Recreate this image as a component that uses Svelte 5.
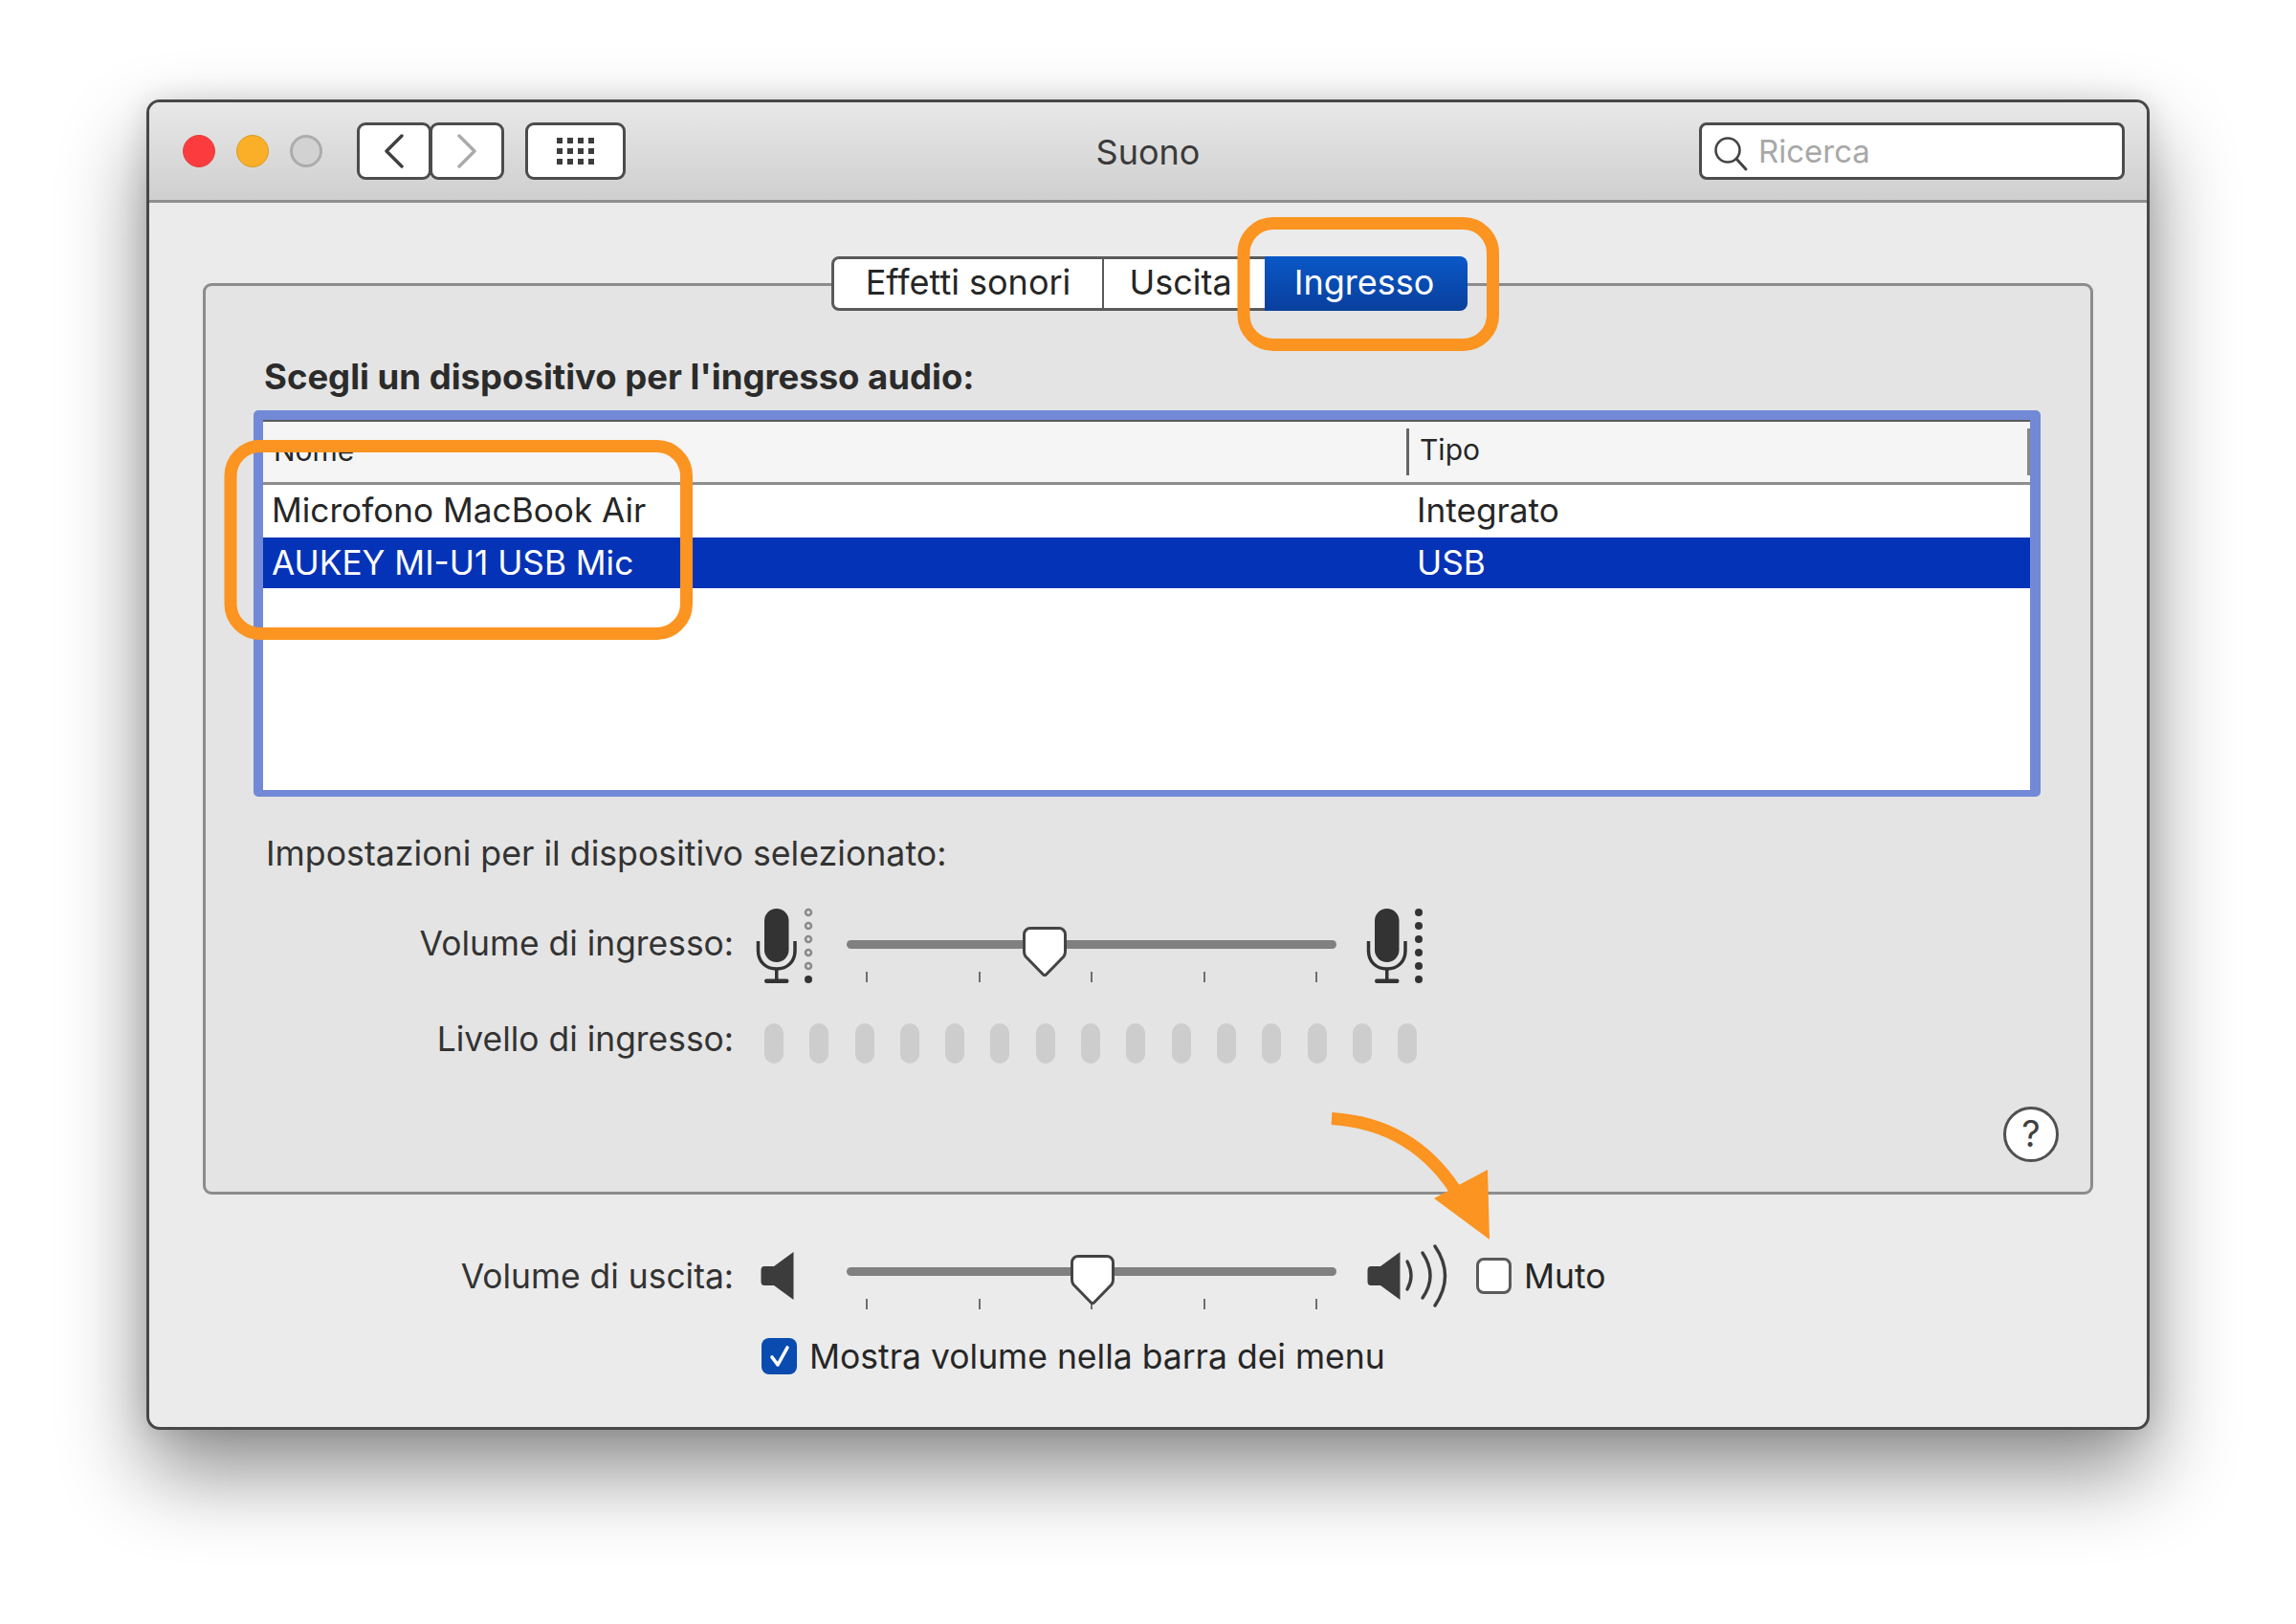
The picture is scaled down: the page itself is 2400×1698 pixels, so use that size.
<script>
  const devices = [
    { name: 'Microfono MacBook Air', type: 'Integrato', selected: false },
    { name: 'AUKEY MI-U1 USB Mic', type: 'USB', selected: true }
  ];
  const ticks = [0, 1, 2, 3, 4];
  const micDots = [8, 22, 36, 50, 64, 78];
  const levels = Array.from({ length: 15 }, (_, i) => i);
  const gridDots = Array.from({ length: 12 }, (_, i) => i);
</script>

{#snippet mic(full)}
  <svg class="mic" width="70" height="85" viewBox="0 0 70 85">
    <rect x="14" y="4" width="25.5" height="56" rx="12.7" fill="#333" />
    <path d="M7.5 38V48C7.5 59 15 67 26.75 67S46 59 46 48V38" fill="none" stroke="#333" stroke-width="3.5" />
    <path d="M26.75 67V79" stroke="#333" stroke-width="3.5" />
    <rect x="14" y="77.5" width="25.5" height="4.5" rx="2.2" fill="#333" />
    {#each micDots as y, i}
      {#if full || i === 5}
        <circle cx="60" cy={y} r="4" fill="#333" />
      {:else}
        <circle cx="60" cy={y} r="3" fill="none" stroke="#8a8a8a" stroke-width="2.5" />
      {/if}
    {/each}
  </svg>
{/snippet}

{#snippet slider(left, top)}
  <div class="slider">
    <div class="track">
      <svg class="knob" style="left:{left}px;top:{top}px" width="46" height="52" viewBox="0 0 46 52">
        <path d="M8 1.500H38A6.500 6.500 0 0 1 44.500 8V26Q44.500 29 43 31L24 50.500H22L3 31Q1.500 29 1.500 26V8A6.500 6.500 0 0 1 8 1.500Z" fill="#fff" stroke="#444" stroke-width="3" stroke-linejoin="round" />
      </svg>
    </div>
    <div class="ticks">
      {#each ticks as t (t)}<span class="tick"></span>{/each}
    </div>
  </div>
{/snippet}

<div class="page">
  <div class="window">
    <header class="titlebar">
      <div class="tb-left">
        <div class="lights">
          <span class="light red"></span>
          <span class="light orange"></span>
          <span class="light gray"></span>
        </div>
        <div class="nav">
          <button class="btn nav-btn" aria-label="Indietro">
            <svg width="22" height="36" viewBox="0 0 22 36"><path d="M19 2L3 18 19 34" fill="none" stroke="#3f3f3f" stroke-width="3.4" stroke-linecap="round" stroke-linejoin="round" /></svg>
          </button>
          <button class="btn nav-btn fwd" aria-label="Avanti">
            <svg width="22" height="36" viewBox="0 0 22 36"><path d="M3 2L19 18 3 34" fill="none" stroke="#aaa" stroke-width="3.4" stroke-linecap="round" stroke-linejoin="round" /></svg>
          </button>
        </div>
        <button class="btn grid-btn" aria-label="Mostra tutto">
          <span class="grid-icon">{#each gridDots as d (d)}<i></i>{/each}</span>
        </button>
      </div>
      <div class="title">Suono</div>
      <div class="tb-right">
        <div class="search">
          <svg width="38" height="38" viewBox="0 0 38 38"><circle cx="15" cy="15" r="12.5" fill="none" stroke="#444" stroke-width="2.6" /><path d="M24 24L34 35" stroke="#444" stroke-width="3" stroke-linecap="round" /></svg>
          <span class="placeholder">Ricerca</span>
        </div>
      </div>
    </header>

    <main class="content">
      <section class="panel">
        <div class="tabs">
          <div class="tab first">Effetti sonori</div>
          <div class="tab second">Uscita</div>
          <div class="tab active">Ingresso</div>
        </div>
        <h2 class="heading">Scegli un dispositivo per l'ingresso audio:</h2>

        <div class="list">
          <div class="list-head">
            <span class="col-name">Nome</span>
            <span class="col-type">Tipo</span>
          </div>
          {#each devices as d}
            <div class="list-row" class:selected={d.selected}>
              <span class="cell-name">{d.name}</span>
              <span class="cell-type">{d.type}</span>
            </div>
          {/each}
        </div>

        <p class="subhead">Impostazioni per il dispositivo selezionato:</p>

        <div class="input-row">
          <div class="label">Volume di ingresso:</div>
          <div class="icon-l">{@render mic(false)}</div>
          {@render slider(184, -14)}
          <div class="icon-r">{@render mic(true)}</div>
        </div>

        <div class="level-row">
          <div class="label">Livello di ingresso:</div>
          <div class="levels">
            {#each levels as l (l)}<span class="pill"></span>{/each}
          </div>
        </div>

        <div class="help">?</div>
      </section>

      <div class="output-row">
        <div class="label">Volume di uscita:</div>
        <div class="spk-l">
          <svg width="35" height="50" viewBox="0 0 35 50"><path d="M4 15H14L34.500 0V50L14 35H4Q0.500 35 0.500 31V19Q0.500 15 4 15Z" fill="#3c3c3c" /></svg>
        </div>
        {@render slider(234, -13)}
        <div class="spk-r">
          <svg width="90" height="68" viewBox="0 0 90 68">
            <path d="M4 23H14L34.500 8V58L14 43H4Q0.500 43 0.500 39V27Q0.500 23 4 23Z" fill="#3c3c3c" />
            <g fill="none" stroke="#3c3c3c" stroke-width="3.4" stroke-linecap="round">
              <path d="M42 18Q50 33 42 47" />
              <path d="M58 9Q74 33 58 56" />
              <path d="M71 2Q92 33 71 64" />
            </g>
          </svg>
        </div>
        <span class="check"></span>
        <span class="muto">Muto</span>
      </div>

      <div class="menu-row">
        <span class="check on">
          <svg width="24" height="28" viewBox="0 0 24 28"><path d="M4 15L10 23 20 5" fill="none" stroke="#fff" stroke-width="3.6" stroke-linecap="round" stroke-linejoin="round" /></svg>
        </span>
        <span class="menu-text">Mostra volume nella barra dei menu</span>
      </div>
    </main>
  </div>

  <svg class="marks" width="2400" height="1698" viewBox="0 0 2400 1698">
    <rect x="1300" y="233.500" width="260.500" height="127" rx="31" fill="none" stroke="#fb9420" stroke-width="13" />
    <rect x="241" y="466.500" width="476.500" height="196" rx="31" fill="none" stroke="#fb9420" stroke-width="13" />
    <path d="M1392 1169.500Q1480 1175 1526 1252" fill="none" stroke="#fb9420" stroke-width="13" />
    <path d="M1555 1223L1557 1296 1499 1253Z" fill="#fb9420" />
  </svg>
</div>

<style>
  :global(body) { margin: 0; background: #fff; }
  .page {
    position: relative;
    width: 2400px;
    height: 1698px;
    padding: 104px 0 0 153px;
    box-sizing: border-box;
    overflow: hidden;
    font-family: Inter, "Liberation Sans", sans-serif;
    color: #262626;
  }
  .window {
    width: 2094px;
    height: 1391px;
    box-sizing: border-box;
    border: 3px solid #474747;
    border-radius: 14px;
    background: #ebebeb;
    box-shadow: 0 44px 88px rgba(0, 0, 0, 0.45), 0 0 30px rgba(0, 0, 0, 0.12);
    overflow: hidden;
  }
  .titlebar {
    height: 105px;
    box-sizing: border-box;
    display: grid;
    grid-template-columns: 1fr auto 1fr;
    align-items: center;
    padding: 0 23px 0 35px;
    background: linear-gradient(#e8e8e8, #cfcfcf);
    border-bottom: 3px solid #8e8e8e;
  }
  .tb-left { display: flex; align-items: center; margin-top: -1px; }
  .tb-right { display: flex; justify-content: flex-end; margin-top: -1px; }
  .lights { display: flex; gap: 22px; }
  .light { width: 34px; height: 34px; border-radius: 50%; box-sizing: border-box; }
  .red { background: #fc3b3e; border: 1px solid #e0443e; }
  .orange { background: #fbae27; border: 1px solid #d99c22; }
  .gray { background: #d2d2d2; border: 3px solid #acacac; }
  .btn {
    display: flex;
    align-items: center;
    justify-content: center;
    height: 60px;
    padding: 0;
    box-sizing: border-box;
    background: #fff;
    border: 3px solid #4c4c4c;
    border-radius: 9px;
  }
  .nav { display: flex; margin-left: 36px; }
  .nav-btn { width: 78px; }
  .fwd { margin-left: -2px; }
  .grid-btn { width: 105px; margin-left: 22px; }
  .grid-icon { display: grid; grid-template-columns: repeat(4, 6px); grid-auto-rows: 6px; gap: 5px; }
  .grid-icon i { background: #3c3c3c; }
  .title { font-size: 36px; margin: 2px 12px 0 0; color: #3a3a3a; }
  .search {
    width: 445px;
    height: 60px;
    box-sizing: border-box;
    display: flex;
    align-items: center;
    gap: 9px;
    padding-left: 12px;
    background: #fff;
    border: 3px solid #4c4c4c;
    border-radius: 8px;
  }
  .search svg { margin-top: 6px; }
  .placeholder { font-size: 33px; color: #a8a8a8; }
  .content { display: flex; flex-direction: column; padding: 84px 56px 0; }
  .panel {
    height: 953px;
    box-sizing: border-box;
    display: flex;
    flex-direction: column;
    align-items: flex-start;
    background: #e4e4e4;
    border: 3px solid #8c8c8c;
    border-radius: 9px;
  }
  .tabs {
    display: flex;
    height: 57px;
    margin: -31px 0 0 654px;
    font-size: 36px;
  }
  .tab { display: flex; align-items: center; justify-content: center; box-sizing: border-box; height: 57px; background: #fff; padding-bottom: 4px; }
  .first { width: 285px; border: 3px solid #5a5a5a; border-right: 2px solid #5a5a5a; border-radius: 8px 0 0 8px; }
  .second { width: 168px; border-top: 3px solid #5a5a5a; border-bottom: 3px solid #5a5a5a; padding-right: 8px; }
  .active { width: 212px; color: #fff; background: linear-gradient(#0a58c8, #093f9c); border-radius: 0 8px 8px 0; padding-right: 4px; }
  .heading { margin: 49px 0 0 61px; font-size: 36.5px; line-height: 40px; font-weight: 700; color: #2b2b2b; white-space: nowrap; }
  .list {
    position: relative;
    width: 1868px;
    height: 404px;
    box-sizing: border-box;
    margin: 15px 0 0 50px;
    border: 10px solid #7189d6;
    border-bottom-width: 7px;
    border-right-width: 11px;
    border-radius: 5px;
    background: #fff;
    box-shadow: inset 0 2px 0 #5b5b5b;
  }
  .list-head {
    display: flex;
    align-items: center;
    height: 66px;
    box-sizing: border-box;
    margin-top: 2px;
    background: #f5f5f5;
    border-bottom: 3px solid #8e8e8e;
    font-size: 30px;
  }
  .col-name { width: 1195px; padding-left: 11px; box-sizing: border-box; margin-top: -4px; }
  .col-type {
    flex: 1;
    align-self: stretch;
    display: flex;
    align-items: center;
    margin: 7px 0;
    padding: 0 0 5px 11px;
    border-left: 3px solid #666;
    border-right: 3px solid #888;
  }
  .list-row { display: flex; align-items: center; height: 55px; box-sizing: border-box; padding-bottom: 4px; font-size: 35.2px; }
  .list-row.selected { height: 53px; padding-bottom: 2px; background: #0433b8; color: #fff; }
  .cell-name { width: 1206px; padding-left: 9px; box-sizing: border-box; }
  .subhead { margin: 39px 0 0 63px; font-size: 35.7px; line-height: 40px; color: #333; white-space: nowrap; }
  .label { flex: none; text-align: right; font-size: 35.4px; color: #333; white-space: nowrap; }
  .input-row { display: flex; height: 85px; margin-top: 34px; }
  .input-row > .label { width: 552px; line-height: 82px; }
  .icon-l { width: 118px; padding-left: 18px; box-sizing: border-box; }
  .icon-r { margin-left: 26px; }
  .mic { display: block; }
  .slider { width: 512px; flex: none; }
  .input-row .slider { padding-top: 37px; }
  .output-row .slider { padding-top: 24px; }
  .track { position: relative; height: 9px; border-radius: 4.5px; background: #808080; }
  .knob { position: absolute; }
  .ticks { display: flex; justify-content: space-between; padding: 0 20px; margin-top: 24px; }
  .tick { width: 2px; height: 11px; background: #6e6e6e; }
  .level-row { display: flex; height: 42px; margin-top: 39px; }
  .level-row > .label { width: 552px; line-height: 34px; }
  .levels { display: flex; gap: 27.3px; padding-left: 32px; }
  .pill { width: 20px; height: 42px; border-radius: 10px; background: #cdcdcd; }
  .help {
    align-self: flex-end;
    width: 58px;
    height: 58px;
    box-sizing: border-box;
    margin: 45px 33px 0 0;
    display: flex;
    align-items: center;
    justify-content: center;
    border: 3px solid #505050;
    border-radius: 50%;
    background: #fff;
    color: #404040;
    font-size: 38px;
    padding-bottom: 3px;
  }
  .output-row { display: flex; height: 68px; margin-top: 52px; margin-left: -56px; }
  .output-row > .label { width: 611px; line-height: 68px; }
  .spk-l { width: 118px; padding: 8px 0 0 28px; box-sizing: border-box; }
  .spk-l svg, .spk-r svg { display: block; }
  .spk-r { margin-left: 32px; }
  .check {
    flex: none;
    width: 37px;
    height: 38px;
    box-sizing: border-box;
    display: flex;
    align-items: center;
    justify-content: center;
    background: #fff;
    border: 3px solid #5a5a5a;
    border-radius: 8px;
  }
  .output-row .check { margin: 14px 0 0 24px; }
  .muto { margin-left: 13px; font-size: 35.5px; line-height: 68px; }
  .check.on { background: #0a4bb0; border: none; }
  .menu-row { display: flex; align-items: center; gap: 13px; margin: 29px 0 0 584px; height: 39px; white-space: nowrap; }
  .menu-text { font-size: 35.5px; padding-top: 2px; }
  .marks { position: absolute; left: 0; top: 0; pointer-events: none; }
</style>
